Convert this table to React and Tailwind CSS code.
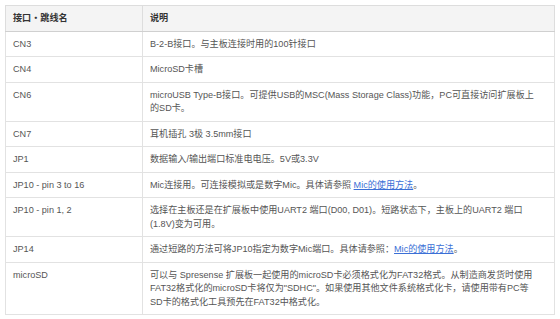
export default function App() {
  const rows = [
    ["CN3", <>B-2-B接口。与主板连接时用的100针接口</>],
    ["CN4", <>MicroSD卡槽</>],
    ["CN6", <>microUSB Type-B接口。可提供USB的MSC(Mass Storage Class)功能，PC可直接访问扩展板上<br />的SD卡。</>],
    ["CN7", <>耳机插孔 3极 3.5mm接口</>],
    ["JP1", <>数据输入/输出端口标准电电压。5V或3.3V</>],
    ["JP10 - pin 3 to 16", <>Mic连接用。可连接模拟或是数字Mic。具体请参照 <a className="text-[#3b6fd6] underline">Mic的使用方法</a>。</>],
    ["JP10 - pin 1, 2", <>选择在主板还是在扩展板中使用UART2 端口(D00, D01)。短路状态下，主板上的UART2 端口<br />(1.8V)变为可用。</>],
    ["JP14", <>通过短路的方法可将JP10指定为数字Mic端口。具体请参照：<a className="text-[#3b6fd6] underline">Mic的使用方法</a>。</>],
    ["microSD", <>可以与 Spresense 扩展板一起使用的microSD卡必须格式化为FAT32格式。从制造商发货时使用<br />FAT32格式化的microSD卡将仅为"SDHC"。如果使用其他文件系统格式化卡，请使用带有PC等<br />SD卡的格式化工具预先在FAT32中格式化。</>],
  ];
  return (
    <div className="bg-white w-[560px] h-[319px] p-[5px] font-['Liberation_Sans','Noto_Sans_CJK_SC',sans-serif] text-[9.1px] leading-[13.5px] text-[#555]">
      <table className="w-[550px] border-collapse border border-[#ddd] table-fixed">
        <colgroup>
          <col className="w-[137px]" />
          <col />
        </colgroup>
        <thead>
          <tr className="bg-[#f4f4f4]">
            <th className="text-left font-bold text-[#333] px-[7px] pt-[6px] pb-[5px] border border-[#ddd] border-b-[#d0d0d0]">接口・跳线名</th>
            <th className="text-left font-bold text-[#333] px-[7px] pt-[6px] pb-[5px] border border-[#ddd] border-b-[#d0d0d0]">说明</th>
          </tr>
        </thead>
        <tbody>
          {rows.map(([a, b], i) => (
            <tr key={i}>
              <td className="align-top px-[7px] pt-[6px] pb-[5px] border border-[#e2e2e2]">{a}</td>
              <td className="align-top px-[7px] pt-[6px] pb-[5px] border border-[#e2e2e2] whitespace-nowrap">{b}</td>
            </tr>
          ))}
        </tbody>
      </table>
    </div>
  );
}
